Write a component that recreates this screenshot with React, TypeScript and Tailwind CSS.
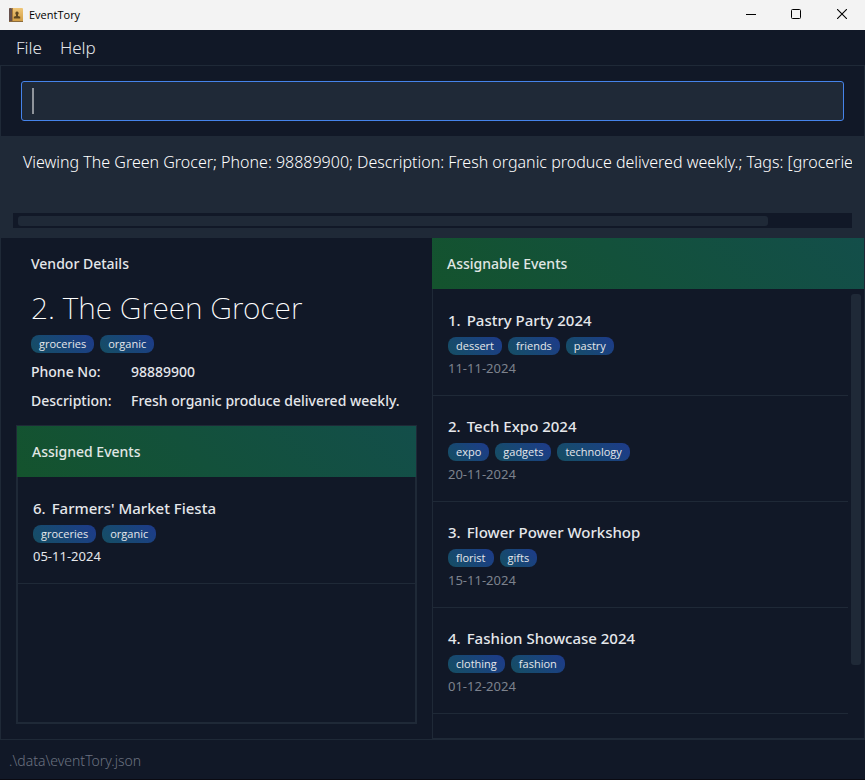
import { useState } from "react";

type EventItem = { id: number; name: string; tags: string[]; date: string };

const assigned: EventItem[] = [
  { id: 6, name: "Farmers' Market Fiesta", tags: ["groceries", "organic"], date: "05-11-2024" },
];

const assignable: EventItem[] = [
  { id: 1, name: "Pastry Party 2024", tags: ["dessert", "friends", "pastry"], date: "11-11-2024" },
  { id: 2, name: "Tech Expo 2024", tags: ["expo", "gadgets", "technology"], date: "20-11-2024" },
  { id: 3, name: "Flower Power Workshop", tags: ["florist", "gifts"], date: "15-11-2024" },
  { id: 4, name: "Fashion Showcase 2024", tags: ["clothing", "fashion"], date: "01-12-2024" },
];

function Tags({ items }: { items: string[] }) {
  return (
    <ul className="flex gap-[6px]">
      {items.map((t) => (
        <li
          key={t}
          className="h-[18px] rounded-lg bg-linear-45 from-[#164e63] to-[#1e3a8a] px-2 font-['Open_Sans',sans-serif] text-[11px] leading-[18px] text-[#e5e7eb]"
        >
          {t}
        </li>
      ))}
    </ul>
  );
}

function SectionHeader({ title }: { title: string }) {
  return (
    <h2 className="h-[51px] shrink-0 bg-linear-45 from-[#14532d] to-[#134e4a] px-[15px] text-[14px] leading-[51px] font-medium text-[#e0e7e5]">
      {title}
    </h2>
  );
}

function EventRow({ event, muted }: { event: EventItem; muted?: boolean }) {
  return (
    <li className="h-[106px] shrink-0 border-b border-[#1f2937] px-[15px] pt-[18px]">
      <h3 className="flex gap-[6px] text-[15px] leading-6 font-medium text-[#e5e7eb]">
        <span>{event.id}.</span>
        <span>{event.name}</span>
      </h3>
      <div className="pt-[5px]">
        <Tags items={event.tags} />
      </div>
      <p className={muted ? "pt-[3px] text-[13px] leading-5 text-[#7d828d]" : "pt-[3px] text-[13px] leading-5 text-[#e5e7eb]"}>
        {event.date}
      </p>
    </li>
  );
}

function TitleBar() {
  return (
    <header className="flex h-[30px] shrink-0 items-center bg-[#f3f3f3] pl-[9px] text-black">
      <svg width="14" height="14" viewBox="0 0 14 14" aria-hidden="true">
        <defs>
          <linearGradient id="cover" x1="0" y1="0" x2="0" y2="1">
            <stop offset="0" stopColor="#efc678" />
            <stop offset="1" stopColor="#d09b41" />
          </linearGradient>
        </defs>
        <rect x="0" y="0" width="14" height="14" rx="1" fill="url(#cover)" />
        <rect x="0" y="0" width="3" height="14" rx="1" fill="#66514d" />
        <rect x="3" y="0" width="1" height="14" fill="#a97b3b" />
        <rect x="0" y="13" width="14" height="1" fill="#8b6b3d" />
        <path d="M8 3.500a1.800 1.800 0 0 1 1 3.200v1.300l2.200.8v1.700H4.800V8.800l2.200-.8V6.700A1.800 1.800 0 0 1 8 3.500z" fill="#5f4721" />
      </svg>
      <h1 className="pl-[6px] font-['Open_Sans',sans-serif] text-[11px]">EventTory</h1>
      <div className="ml-auto flex h-full pb-[2px]">
        <button aria-label="Minimize" className="flex w-11 items-center justify-center">
          <svg width="10" height="10" viewBox="0 0 10 10" fill="none" stroke="currentColor">
            <path d="M0 5.500H10" />
          </svg>
        </button>
        <button aria-label="Maximize" className="flex w-[46px] items-center justify-center">
          <svg width="10" height="10" viewBox="0 0 10 10" fill="none" stroke="currentColor">
            <rect x="0.500" y="0.500" width="9" height="9" rx="1" />
          </svg>
        </button>
        <button aria-label="Close" className="flex w-[46px] items-center justify-center">
          <svg width="10" height="10" viewBox="0 0 10 10" fill="none" stroke="currentColor" strokeWidth="1.100">
            <path d="M0 0L10 10M10 0L0 10" />
          </svg>
        </button>
      </div>
    </header>
  );
}

export default function App() {
  const [command, setCommand] = useState("");

  return (
    <div className="flex h-screen flex-col overflow-hidden border-b border-[#0a0a12] bg-[#111827] font-['Noto_Sans','Open_Sans',sans-serif] text-[#e5e7eb]">
      <TitleBar />
      <nav className="flex h-9 shrink-0 items-center gap-[18px] border-b border-[#1f2937] px-4 text-[17px] font-light">
        <button>File</button>
        <button>Help</button>
      </nav>

      <div className="flex min-h-0 flex-1 flex-col border-x border-[#1f2937]">
        <div className="shrink-0 px-5 py-[15px]">
          <div className="flex h-10 items-center rounded-[3px] border border-[#4583ea] bg-[#1f2937] px-[10px]">
            <span className="h-[26px] w-[2px] bg-[#8f949b]" />
            <input
              aria-label="Command"
              className="h-full flex-1 bg-transparent text-[17px] font-light outline-none"
              value={command}
              onChange={(e) => setCommand(e.target.value)}
            />
          </div>
        </div>

        <div className="flex h-[102px] shrink-0 flex-col bg-[#1f2937] px-3 pt-[13px] pb-[10px]">
          <textarea
            readOnly
            wrap="off"
            aria-label="Result"
            className="min-h-0 flex-1 resize-none overflow-hidden pl-[10px] text-[16px] leading-[26px] font-light text-white outline-none"
            value="Viewing The Green Grocer; Phone: 98889900; Description: Fresh organic produce delivered weekly.; Tags: [groceries][organic]"
          />
          <div className="h-[15px] shrink-0 bg-[#111827] pt-[3px] pr-[1px] pl-[5px]">
            <div className="h-[10px] w-[90%] rounded-[3px] bg-[#1f2937]" />
          </div>
        </div>

        <main className="grid min-h-0 flex-1 grid-cols-[431fr_432fr]">
          <section className="flex min-h-0 flex-col px-[15px] pb-[15px]">
            <div className="px-[15px]">
              <h2 className="text-[14px] leading-[51px] font-medium">Vendor Details</h2>
              <p className="text-[30px] leading-[38px] font-extralight text-white">2. The Green Grocer</p>
              <div className="pt-2">
                <Tags items={["groceries", "organic"]} />
              </div>
              <dl className="grid grid-cols-[100px_1fr] pt-1 pb-[10px] text-[14px] leading-[29px] font-medium whitespace-nowrap">
                <dt>Phone No:</dt>
                <dd>98889900</dd>
                <dt>Description:</dt>
                <dd>Fresh organic produce delivered weekly.</dd>
              </dl>
            </div>
            <div className="flex min-h-0 flex-1 flex-col border border-[#1f2937]">
              <SectionHeader title="Assigned Events" />
              <ul className="min-h-0 flex-1 overflow-hidden border border-t-0 border-[#1f2937] pt-[1px]">
                {assigned.map((e) => (
                  <EventRow key={e.id} event={e} />
                ))}
              </ul>
            </div>
          </section>

          <section className="flex min-h-0 flex-col">
            <SectionHeader title="Assignable Events" />
            <div className="flex min-h-0 flex-1 border-b border-l border-[#1f2937] pr-[3px]">
              <ul className="min-h-0 flex-1 overflow-hidden pt-[1px]">
                {assignable.map((e) => (
                  <EventRow key={e.id} event={e} muted />
                ))}
              </ul>
              <div className="ml-[3px] w-[10px] pt-[5px]">
                <div className="h-[83.5%] rounded-[3px] bg-[#1f2937]" />
              </div>
            </div>
          </section>
        </main>
      </div>

      <footer className="h-10 shrink-0 border-t border-[#1f2937] px-[9px] text-[14px] leading-[42px] font-light text-[#6b7280]">
        .\data\eventTory.json
      </footer>
    </div>
  );
}
